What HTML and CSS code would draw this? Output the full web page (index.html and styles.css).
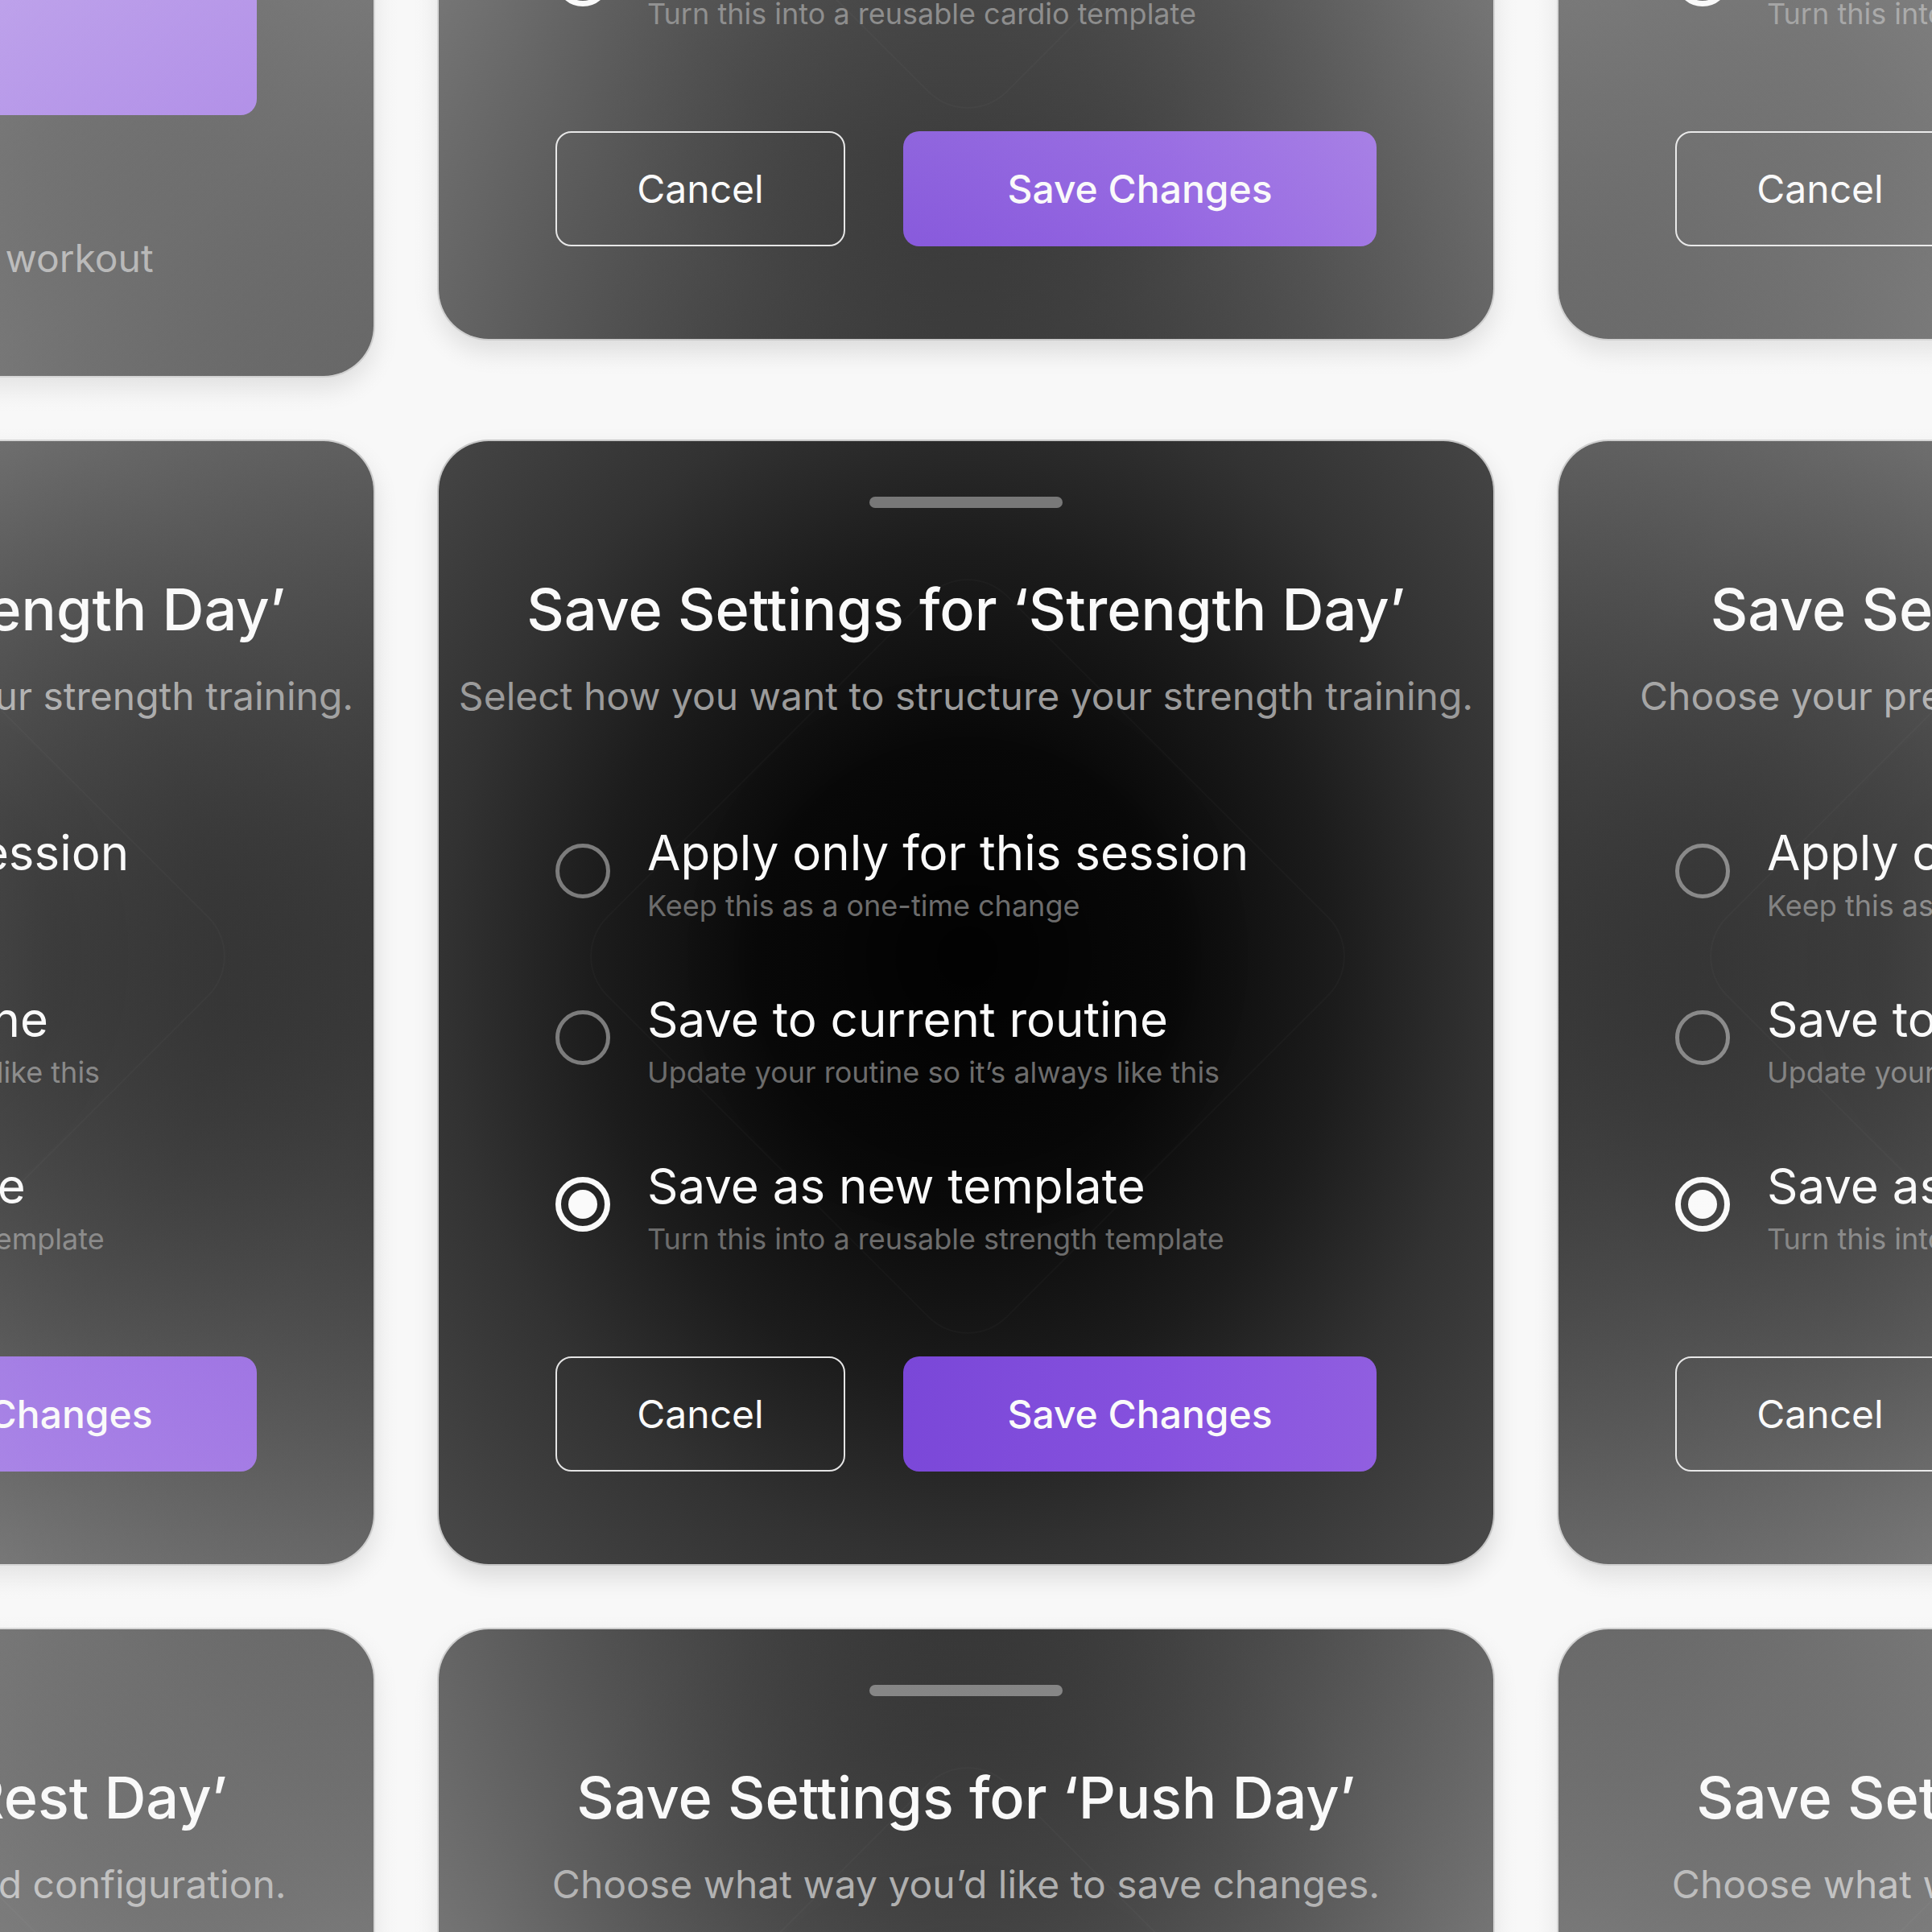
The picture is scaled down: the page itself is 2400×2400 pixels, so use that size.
FILE: index.html
```html
<!DOCTYPE html>
<html lang="en">
<head>
<meta charset="utf-8">
<title>Save Settings</title>
<link rel="stylesheet" href="styles.css">
</head>
<body>
<main class="stage">
  <div class="column">
    <section class="card">
      <div class="handle"></div>
      <h2 class="title">Save Settings for ‘Full Body Day’</h2>
      <p class="subtitle">Select how you want to save this workout.</p>
      <div class="options">
        <div class="option"><span class="radio radio--on"></span><div class="option-text"><span class="option-title">Apply only for this session</span><span class="option-sub">Keep this as a one-time change</span></div></div>
      </div>
      <div class="tile"><span class="tile-label">Recommended for you</span></div>
      <p class="note">Changes apply to the full workout</p>
    </section>
    <section class="card">
      <div class="handle"></div>
      <h2 class="title">Save Settings for ‘Strength Day’</h2>
      <p class="subtitle">Select how you want to structure your strength training.</p>
      <div class="options">
        <div class="option"><span class="radio"></span><div class="option-text"><span class="option-title">Apply only for this session</span><span class="option-sub">Keep this as a one-time change</span></div></div>
        <div class="option"><span class="radio"></span><div class="option-text"><span class="option-title">Save to current routine</span><span class="option-sub">Update your routine so it’s always like this</span></div></div>
        <div class="option"><span class="radio radio--on"></span><div class="option-text"><span class="option-title">Save as new template</span><span class="option-sub">Turn this into a reusable strength template</span></div></div>
      </div>
      <div class="actions"><button class="btn btn--ghost">Cancel</button><button class="btn btn--primary">Save Changes</button></div>
    </section>
    <section class="card">
      <div class="handle"></div>
      <h2 class="title">Save Settings for ‘Rest Day’</h2>
      <p class="subtitle">Choose how to apply the updated configuration.</p>
      <div class="options">
        <div class="option"><span class="radio"></span><div class="option-text"><span class="option-title">Apply only for this session</span><span class="option-sub">Keep this as a one-time change</span></div></div>
        <div class="option"><span class="radio"></span><div class="option-text"><span class="option-title">Save to current routine</span><span class="option-sub">Update your routine so it’s always like this</span></div></div>
        <div class="option"><span class="radio radio--on"></span><div class="option-text"><span class="option-title">Save as new template</span><span class="option-sub">Turn this into a reusable recovery template</span></div></div>
      </div>
      <div class="actions"><button class="btn btn--ghost">Cancel</button><button class="btn btn--primary">Save Changes</button></div>
    </section>
  </div>

  <div class="column">
    <section class="card card--raised">
      <div class="handle"></div>
      <h2 class="title">Save Settings for ‘Cardio Day’</h2>
      <p class="subtitle">Select how you want to structure your cardio training.</p>
      <div class="options">
        <div class="option"><span class="radio"></span><div class="option-text"><span class="option-title">Apply only for this session</span><span class="option-sub">Keep this as a one-time change</span></div></div>
        <div class="option"><span class="radio"></span><div class="option-text"><span class="option-title">Save to current routine</span><span class="option-sub">Update your routine so it’s always like this</span></div></div>
        <div class="option"><span class="radio radio--on"></span><div class="option-text"><span class="option-title">Save as new template</span><span class="option-sub">Turn this into a reusable cardio template</span></div></div>
      </div>
      <div class="actions"><button class="btn btn--ghost">Cancel</button><button class="btn btn--primary">Save Changes</button></div>
    </section>
    <section class="card card--focus">
      <div class="handle"></div>
      <h2 class="title">Save Settings for ‘Strength Day’</h2>
      <p class="subtitle">Select how you want to structure your strength training.</p>
      <div class="options">
        <div class="option"><span class="radio"></span><div class="option-text"><span class="option-title">Apply only for this session</span><span class="option-sub">Keep this as a one-time change</span></div></div>
        <div class="option"><span class="radio"></span><div class="option-text"><span class="option-title">Save to current routine</span><span class="option-sub">Update your routine so it’s always like this</span></div></div>
        <div class="option"><span class="radio radio--on"></span><div class="option-text"><span class="option-title">Save as new template</span><span class="option-sub">Turn this into a reusable strength template</span></div></div>
      </div>
      <div class="actions"><button class="btn btn--ghost">Cancel</button><button class="btn btn--primary">Save Changes</button></div>
    </section>
    <section class="card">
      <div class="handle"></div>
      <h2 class="title">Save Settings for ‘Push Day’</h2>
      <p class="subtitle">Choose what way you’d like to save changes.</p>
      <div class="options">
        <div class="option"><span class="radio"></span><div class="option-text"><span class="option-title">Apply only for this session</span><span class="option-sub">Keep this as a one-time change</span></div></div>
        <div class="option"><span class="radio"></span><div class="option-text"><span class="option-title">Save to current routine</span><span class="option-sub">Update your routine so it’s always like this</span></div></div>
        <div class="option"><span class="radio radio--on"></span><div class="option-text"><span class="option-title">Save as new template</span><span class="option-sub">Turn this into a reusable push template</span></div></div>
      </div>
      <div class="actions"><button class="btn btn--ghost">Cancel</button><button class="btn btn--primary">Save Changes</button></div>
    </section>
  </div>

  <div class="column">
    <section class="card card--raised">
      <div class="handle"></div>
      <h2 class="title">Save Settings for ‘Mobility Day’</h2>
      <p class="subtitle">Select how you want to structure your mobility work.</p>
      <div class="options">
        <div class="option"><span class="radio"></span><div class="option-text"><span class="option-title">Apply only for this session</span><span class="option-sub">Keep this as a one-time change</span></div></div>
        <div class="option"><span class="radio"></span><div class="option-text"><span class="option-title">Save to current routine</span><span class="option-sub">Update your routine so it’s always like this</span></div></div>
        <div class="option"><span class="radio radio--on"></span><div class="option-text"><span class="option-title">Save as new template</span><span class="option-sub">Turn this into a reusable mobility template</span></div></div>
      </div>
      <div class="actions"><button class="btn btn--ghost">Cancel</button><button class="btn btn--primary">Save Changes</button></div>
    </section>
    <section class="card">
      <div class="handle"></div>
      <h2 class="title">Save Settings for ‘Arm Day’</h2>
      <p class="subtitle">Choose your preferred option for these changes.</p>
      <div class="options">
        <div class="option"><span class="radio"></span><div class="option-text"><span class="option-title">Apply only for this session</span><span class="option-sub">Keep this as a one-time change</span></div></div>
        <div class="option"><span class="radio"></span><div class="option-text"><span class="option-title">Save to current routine</span><span class="option-sub">Update your routine so it’s always like this</span></div></div>
        <div class="option"><span class="radio radio--on"></span><div class="option-text"><span class="option-title">Save as new template</span><span class="option-sub">Turn this into a reusable arm template</span></div></div>
      </div>
      <div class="actions"><button class="btn btn--ghost">Cancel</button><button class="btn btn--primary">Save Changes</button></div>
    </section>
    <section class="card">
      <div class="handle"></div>
      <h2 class="title">Save Settings for ‘Push Day’</h2>
      <p class="subtitle">Choose what way you’d like to save changes.</p>
      <div class="options">
        <div class="option"><span class="radio"></span><div class="option-text"><span class="option-title">Apply only for this session</span><span class="option-sub">Keep this as a one-time change</span></div></div>
        <div class="option"><span class="radio"></span><div class="option-text"><span class="option-title">Save to current routine</span><span class="option-sub">Update your routine so it’s always like this</span></div></div>
        <div class="option"><span class="radio radio--on"></span><div class="option-text"><span class="option-title">Save as new template</span><span class="option-sub">Turn this into a reusable push template</span></div></div>
      </div>
      <div class="actions"><button class="btn btn--ghost">Cancel</button><button class="btn btn--primary">Save Changes</button></div>
    </section>
  </div>
</main>
</body>
</html>
```

FILE: styles.css
```css
html, body {
  margin: 0;
  padding: 0;
}

body {
  width: 2400px;
  height: 2400px;
  overflow: hidden;
  background: #f8f8f8;
  font-family: Inter, "Noto Sans", "Liberation Sans", sans-serif;
  position: relative;
}

/* fade of the surrounding cards towards the page edges */
body::after {
  content: "";
  position: absolute;
  inset: 0;
  z-index: 1;
  pointer-events: none;
  background: radial-gradient(circle at 1200px 1200px,
    rgba(248, 248, 248, 0) 680px,
    rgba(248, 248, 248, 0.2) 1100px,
    rgba(248, 248, 248, 0.47) 1700px);
}

.stage {
  display: flex;
  gap: 77px;
  margin-left: -848px;
  margin-top: -930px;
}

.column {
  display: flex;
  flex-direction: column;
  gap: 77px;
  flex: none;
  width: 1314px;
}

.card {
  position: relative;
  isolation: isolate;
  box-sizing: border-box;
  width: 1314px;
  height: 1399px;
  flex: none;
  border-radius: 64px;
  border: 2px solid rgba(0, 0, 0, 0.2);
  background: radial-gradient(ellipse at 50% 47%,
    #040404 0%,
    #0a0a0a 28%,
    #1c1c1c 50%,
    #323232 70%,
    #4a4a4a 100%);
  background-clip: padding-box;
  box-shadow: 0 14px 30px rgba(0, 0, 0, 0.12);
  display: flex;
  flex-direction: column;
  align-items: center;
  padding-top: 69px;
  color: #fafafa;
  overflow: hidden;
}

.card::before {
  content: "";
  position: absolute;
  z-index: -1;
  left: 50%;
  top: 50%;
  width: 700px;
  height: 700px;
  margin: -410px 0 0 -350px;
  transform: rotate(45deg);
  border-radius: 70px;
  border: 2px solid rgba(255, 255, 255, 0.025);
  background: radial-gradient(closest-side, rgba(0, 0, 0, 0.45), rgba(0, 0, 0, 0));
}

.card--raised {
  margin-top: -46px;
  margin-bottom: 46px;
}

.card--focus {
  z-index: 2;
}

.handle {
  flex: none;
  width: 240px;
  height: 14px;
  border-radius: 7px;
  background: #787878;
}

.title {
  margin: 82px 0 0;
  font-size: 72px;
  line-height: 88px;
  font-weight: 500;
  white-space: nowrap;
}

.subtitle {
  margin: 36px 0 0;
  font-size: 48px;
  line-height: 56px;
  font-weight: 400;
  color: #9b9b9b;
  white-space: nowrap;
}

.options {
  width: 1020px;
  margin-top: 130px;
  display: flex;
  flex-direction: column;
  gap: 83px;
}

.option {
  display: flex;
  align-items: flex-start;
  gap: 46px;
}

.radio {
  flex: none;
  box-sizing: border-box;
  width: 68px;
  height: 68px;
  margin-top: 25px;
  border-radius: 50%;
  border: 5px solid #7c7c7c;
}

.radio--on {
  border: 7px solid #fafafa;
  display: flex;
  align-items: center;
  justify-content: center;
}

.radio--on::after {
  content: "";
  width: 36px;
  height: 36px;
  border-radius: 50%;
  background: #fafafa;
}

.option-text {
  display: flex;
  flex-direction: column;
  gap: 8px;
  white-space: nowrap;
}

.option-title {
  font-size: 60px;
  line-height: 72px;
  color: #fafafa;
}

.option-sub {
  font-size: 36px;
  line-height: 44px;
  color: #6c6c6c;
}

.actions {
  width: 1020px;
  margin-top: 124px;
  display: flex;
  gap: 72px;
}

.btn {
  box-sizing: border-box;
  height: 143px;
  border-radius: 20px;
  font-family: inherit;
  font-size: 48px;
  color: #fafafa;
  cursor: pointer;
  padding: 0;
}

.btn--ghost {
  width: 360px;
  flex: none;
  background: transparent;
  border: 2px solid #e4e4e4;
  font-weight: 400;
}

.btn--primary {
  flex: 1;
  border: none;
  background: linear-gradient(100deg, #7a47d8 0%, #8651de 55%, #915fe0 100%);
  font-weight: 500;
}

.tile {
  box-sizing: border-box;
  width: 1020px;
  height: 320px;
  margin-top: 152px;
  flex: none;
  padding: 36px 48px;
  border-radius: 20px;
  background: linear-gradient(100deg, #7a47d8 0%, #8651de 55%, #915fe0 100%);
  font-size: 48px;
  line-height: 56px;
  font-weight: 500;
  color: #fafafa;
}

.note {
  margin: 150px 0 0;
  font-size: 48px;
  line-height: 56px;
  color: #9b9b9b;
  white-space: nowrap;
}
```
